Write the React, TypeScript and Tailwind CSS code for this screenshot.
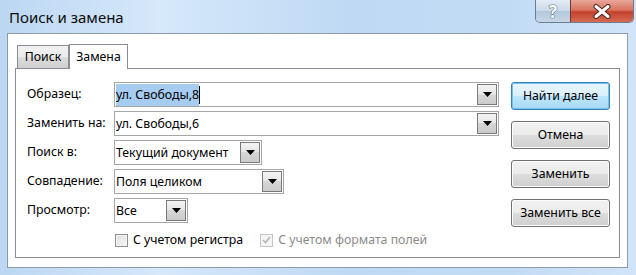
import React from 'react';

interface ComboProps {
  value: string;
  width: string;
  selected?: boolean;
}

function Combo({ value, width, selected }: ComboProps) {
  return (
    <div className={`flex h-[25px] items-center border border-[#a5a5a5] bg-white ${width}`}>
      <div className="flex flex-1 items-center pl-[1px]">
        {selected ? (
          <>
            <span className="bg-[#a6cdf1] py-[2px] leading-[18px]">{value}</span>
            <span className="h-[18px] w-[1px] bg-black"></span>
          </>
        ) : (
          <span className="leading-[18px]">{value}</span>
        )}
      </div>
      {/* arrow button */}
      <div className="mr-[1px] flex h-[21px] w-[20px] items-center justify-center border border-[#7a7a7a] bg-[linear-gradient(#f4f4f4,#e6e6e6_50%,#d6d6d6_50%,#cbcbcb)]">
        <svg width="9" height="5" viewBox="0 0 9 5">
          <path d="M0 0h9L4.5 5z" fill="#000" />
        </svg>
      </div>
    </div>
  );
}

interface BtnProps {
  label: string;
  primary?: boolean;
}

function Btn({ label, primary }: BtnProps) {
  return (
    <button
      className={
        primary
          ? 'h-[28px] w-[99px] rounded-[3px] border border-[#3c7fb1] bg-[linear-gradient(#eaf6fd,#d9f0fc_50%,#bee6fd_50%,#a7d9f5)] text-[12.3px] text-black shadow-[inset_0_0_0_1px_#6ec4f2]'
          : 'h-[28px] w-[99px] rounded-[3px] border border-[#707070] bg-[linear-gradient(#f2f2f2,#ebebeb_50%,#dddddd_50%,#cfcfcf)] text-[12.3px] text-black shadow-[inset_0_0_0_1px_#fcfcfc]'
      }
    >
      {label}
    </button>
  );
}

export default function App() {
  return (
    <div className="flex h-[275px] w-[636px] flex-col overflow-hidden bg-[linear-gradient(90deg,#bcd7f3,#d6e8fa_25%,#bfd9f4_55%,#c2dbf5_80%,#d2e5f8)] font-['Noto_Sans',sans-serif] text-[12.3px] text-black">
      {/* Title bar */}
      <div className="flex h-[33px] items-start justify-between">
        <div className="pl-[9px] pt-[7px] text-[15px] leading-[20px] text-[#0b0b0b]">Поиск и замена</div>
        <div className="mr-[2px] flex h-[23px] overflow-hidden rounded-b-[5px] border border-t-0 border-[#6b7d93]">
          <div className="flex w-[34px] items-center justify-center bg-[linear-gradient(#e4ecf4,#c9d8e8_50%,#b3c7dc_50%,#c6d6e6)] text-[17px] font-bold leading-none text-white [-webkit-text-stroke:1px_#4c5d70] [paint-order:stroke_fill]">
            ?
          </div>
          <div className="flex w-[63px] items-center justify-center border-l border-[#6b3a33] bg-[linear-gradient(#e9a799,#d9745f_45%,#c2412c_55%,#d96a52)]">
            <svg width="18" height="15" viewBox="0 0 18 15">
              <path d="M3 2.5l12 10M15 2.5l-12 10" stroke="#4a2a24" strokeWidth="5" strokeLinecap="round" />
              <path d="M3 2.5l12 10M15 2.5l-12 10" stroke="#fff" strokeWidth="3" strokeLinecap="round" />
            </svg>
          </div>
        </div>
      </div>

      {/* White client panel */}
      <div className="mb-[7px] ml-[7px] mr-[8px] flex flex-1 flex-col border border-[#8d9aa8] bg-white px-[7px] pb-[9px] pt-[10px]">
        {/* tabs */}
        <div className="flex h-[24px] items-end pl-[2px]">
          <div className="flex h-[23px] w-[52px] items-center justify-center border border-b-0 border-[#898c95] bg-[linear-gradient(#f2f2f2,#ebebeb_50%,#dddddd_50%,#cfcfcf)]">
            Поиск
          </div>
          <div className="relative z-10 -mb-[1px] flex h-[25px] w-[59px] items-center justify-center border border-b-0 border-[#898c95] bg-white">
            Замена
          </div>
        </div>

        {/* tab frame */}
        <div className="flex flex-1 justify-between border border-[#898c95] pl-[11px] pr-[9px] pt-[13px]">
          <div className="flex flex-col gap-[4px]">
            <div className="flex items-center">
              <span className="w-[87px]">Образец:</span>
              <Combo value="ул. Свободы,8" width="w-[385px]" selected />
            </div>
            <div className="flex items-center">
              <span className="w-[87px]">Заменить на:</span>
              <Combo value="ул. Свободы,6" width="w-[385px]" />
            </div>
            <div className="flex items-center">
              <span className="w-[87px]">Поиск в:</span>
              <Combo value="Текущий документ" width="w-[148px]" />
            </div>
            <div className="flex items-center">
              <span className="w-[87px]">Совпадение:</span>
              <Combo value="Поля целиком" width="w-[170px]" />
            </div>
            <div className="flex items-center">
              <span className="w-[87px]">Просмотр:</span>
              <Combo value="Все" width="w-[74px]" />
            </div>
            <div className="mt-[4px] flex items-center pl-[88px]">
              <span className="h-[13px] w-[13px] border border-[#8f8f8f] bg-[linear-gradient(135deg,#dcdcdc,#f8f8f8)] shadow-[inset_0_0_0_1px_#f4f4f4]"></span>
              <span className="ml-[5px]">С учетом регистра</span>
              <span className="ml-[17px] flex h-[13px] w-[13px] items-center justify-center border border-[#c5c5c5] bg-[#f4f4f4]">
                <svg width="9" height="8" viewBox="0 0 9 8">
                  <path d="M1 4l2.5 2.5L8 1" stroke="#b5b5b5" strokeWidth="1.6" fill="none" />
                </svg>
              </span>
              <span className="ml-[5px] text-[#8b8b8b]">С учетом формата полей</span>
            </div>
          </div>

          <div className="flex flex-col gap-[11px]">
            <Btn label="Найти далее" primary />
            <Btn label="Отмена" />
            <Btn label="Заменить" />
            <Btn label="Заменить все" />
          </div>
        </div>
      </div>
    </div>
  );
}
